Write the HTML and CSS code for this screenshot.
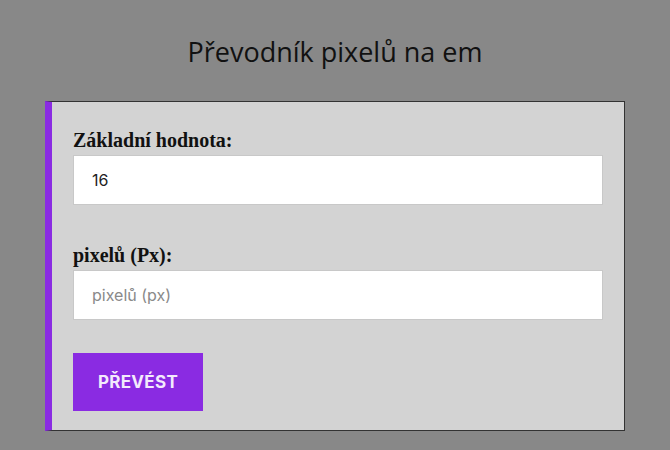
FILE: index.html
```html
<!DOCTYPE html>
<html lang="cs">
<head>
<meta charset="utf-8">
<title>Převodník pixelů na em</title>
<link rel="stylesheet" href="styles.css">
</head>
<body>
<h1 class="title">Převodník pixelů na em</h1>
<div class="card">
  <div class="field">
    <label class="label" for="base">Základní hodnota:</label>
    <input class="input" id="base" type="text" value="16">
  </div>
  <div class="field">
    <label class="label" for="px">pixelů (Px):</label>
    <input class="input" id="px" type="text" placeholder="pixelů (px)">
  </div>
  <button class="btn" type="button">PŘEVÉST</button>
</div>
</body>
</html>
```
FILE: styles.css
```css
html, body {
  margin: 0;
  padding: 0;
  background: #888888;
}
body {
  width: 670px;
  height: 450px;
  overflow: hidden;
}
.title {
  margin: 35px 0 33px;
  height: 33px;
  line-height: 33px;
  font-family: "Open Sans", sans-serif;
  font-weight: 400;
  font-size: 27px;
  color: #111;
  text-align: center;
}
.card {
  box-sizing: border-box;
  margin-left: 45px;
  width: 580px;
  background: #d3d3d3;
  border: 1px solid #333;
  border-left: 7px solid #8a2be2;
  padding: 27px 21px 19px 21px;
  display: flex;
  flex-direction: column;
  align-items: flex-start;
}
.field {
  width: 100%;
  display: flex;
  flex-direction: column;
}
.field + .field {
  margin-top: 39px;
}
.label {
  font-family: "Liberation Serif", serif;
  font-weight: 700;
  font-size: 20px;
  line-height: 22px;
  color: #111;
  margin-bottom: 4px;
}
.input {
  box-sizing: border-box;
  width: 100%;
  height: 50px;
  border: 1px solid #c8c8c8;
  background: #fff;
  padding: 0 18px;
  font-family: Inter, sans-serif;
  font-size: 16px;
  color: #222;
  outline: none;
}
.input::placeholder {
  color: #8a8a8a;
}
.btn {
  margin-top: 33px;
  width: 130px;
  height: 58px;
  border: none;
  background: #8a2be2;
  color: #f3eafc;
  font-family: Inter, sans-serif;
  font-weight: 700;
  font-size: 17px;
  letter-spacing: 0.3px;
  padding: 0;
  cursor: pointer;
}
```
